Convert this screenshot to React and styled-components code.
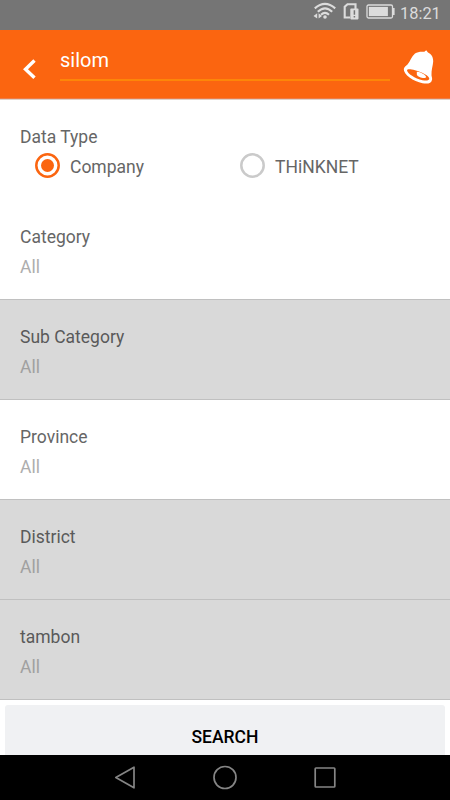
import React from 'react';
import styled, { createGlobalStyle } from 'styled-components';

const GlobalStyle = createGlobalStyle`
  * {
    box-sizing: border-box;
  }

  body {
    margin: 0;
    background: #fff;
    font-family: Roboto, sans-serif;
  }
`;

const Screen = styled.div`
  display: flex;
  flex-direction: column;
  width: 450px;
  height: 800px;
  overflow: hidden;
  background: #fff;
`;

const StatusBar = styled.div`
  display: flex;
  flex: none;
  justify-content: flex-end;
  height: 30px;
  padding-right: 9px;
  background: #757575;
`;

const StatusIcons = styled.svg`
  display: block;
  width: 90px;
  height: 30px;
`;

const Clock = styled.span`
  width: 41px;
  color: #dcdcdc;
  font-size: 16.4px;
  line-height: 28px;
  white-space: nowrap;
`;

const Header = styled.header`
  display: flex;
  flex: none;
  height: 70px;
  background: #fb6510;
  border-bottom: 1px solid #ddd0c9;
  box-shadow: inset 0 -1px #ed7c47;
`;

const BackButton = styled.button`
  width: 60px;
  padding: 0;
  border: 0;
  background: none;

  svg {
    display: block;
  }
`;

const SearchInput = styled.div`
  width: 330px;
  height: 51px;
  padding-top: 18px;
  border-bottom: 2px solid #fd8608;
  color: #fff;
  font-size: 20px;
  line-height: 24px;
`;

const BellIcon = styled.svg`
  display: block;
  width: 60px;
  height: 69px;
`;

const DataType = styled.section`
  flex: none;
  height: 100px;
  padding: 26px 20px 0;
`;

const Label = styled.div`
  color: ${props => (props.$disabled ? '#5a5a5a' : '#666')};
  font-size: 17.5px;
  line-height: 22px;
`;

const Options = styled.div`
  display: flex;
  padding-left: 15px;
  margin-top: 5px;
`;

const Option = styled.div`
  display: flex;
  flex: none;
  gap: 10px;
  width: ${props => props.$width};
  color: #666;
  font-size: 17.5px;
  line-height: 28px;
`;

const RadioIcon = styled.svg`
  display: block;
  flex: none;
  width: 25px;
  height: 25px;
  color: ${props => (props.$checked ? '#fb6510' : '#cacaca')};
`;

const Row = styled.div`
  flex: none;
  height: 100px;
  padding: 26px 20px 0;
  border-bottom: 1px solid #c0c0c0;
  background: ${props => (props.$disabled ? '#d9d9d9' : '#fff')};
`;

const Value = styled.div`
  margin-top: 8px;
  color: ${props => (props.$disabled ? '#a0a0a0' : '#adadad')};
  font-size: 17.5px;
  line-height: 22px;
`;

const Footer = styled.div`
  flex: none;
  height: 55px;
  padding: 5px 5px 0;
`;

const SearchButton = styled.button`
  display: block;
  width: 100%;
  height: 50px;
  padding: 13px 0 0;
  border: 0;
  border-radius: 3px 3px 0 0;
  background: #f0f1f3;
  color: #000;
  font: 500 17.5px/24px Roboto, sans-serif;
`;

const NavBar = styled.nav`
  flex: none;
  height: 45px;
  background: #000;

  svg {
    display: block;
  }
`;

const fields = [
  { label: 'Category', value: 'All' },
  { label: 'Sub Category', value: 'All', disabled: true },
  { label: 'Province', value: 'All' },
  { label: 'District', value: 'All', disabled: true },
  { label: 'tambon', value: 'All', disabled: true },
];

const Radio = ({ checked }) => (
  <RadioIcon $checked={checked} viewBox="0 0 25 25">
    <circle cx="12.5" cy="12.5" r="11.2" fill="none" stroke="currentColor" strokeWidth="2.5" />
    {checked && <circle cx="12.5" cy="12.5" r="6.5" fill="currentColor" />}
  </RadioIcon>
);

const Field = ({ label, value, disabled }) => (
  <Row $disabled={disabled}>
    <Label $disabled={disabled}>{label}</Label>
    <Value $disabled={disabled}>{value}</Value>
  </Row>
);

export default function App() {
  return (
    <>
      <GlobalStyle />
      <Screen>
        <StatusBar>
          <StatusIcons viewBox="310 0 90 30">
            <g fill="none" stroke="#dcdcdc" strokeWidth="2.1">
              <path d="M314.8 8.4Q325 -.6 335.2 8.4" />
              <path d="M317.8 11.8Q325 4.8 332.2 11.8" />
              <path d="M321 14.8Q325 11 329 14.8" />
            </g>
            <circle cx="325" cy="17" r="1.8" fill="#dcdcdc" />
            <path d="M317.2 13.2v5.4l-3.7-2.7zM318.6 13.2v5.4l3.4-2.7z" fill="#dcdcdc" />
            <path d="M350 17.5h-5.3V6.8l2.8-2.6h8v5" fill="none" stroke="#dcdcdc" strokeWidth="2.1" />
            <rect x="350.3" y="8.6" width="8.2" height="10.8" rx=".8" fill="#dcdcdc" />
            <path d="M354.4 10.3v4.4M354.4 16v1.6" stroke="#757575" strokeWidth="1.5" />
            <rect x="367" y="5" width="25.5" height="13" rx="1.5" fill="none" stroke="#dcdcdc" strokeWidth="1.3" />
            <rect x="368.9" y="6.9" width="19" height="9.2" fill="#dcdcdc" />
            <path d="M393.7 8v7" stroke="#dcdcdc" strokeWidth="1.8" />
          </StatusIcons>
          <Clock>18:21</Clock>
        </StatusBar>

        <Header>
          <BackButton aria-label="Back">
            <svg width="60" height="69" viewBox="0 0 60 69">
              <path d="M34.5 30.5L25.5 39.2l9 8.6" fill="none" stroke="#fff" strokeWidth="3.4" />
            </svg>
          </BackButton>
          <SearchInput>silom</SearchInput>
          <BellIcon viewBox="390 30 60 69">
            <path
              fill="#fff"
              fillRule="evenodd"
              d="M424.4 51.8L426.2 50.2 428 52.4C431.6 53.8 433.4 57.5 433.2 61.5C432.9 66 431.2 70 431.5 75.2C431.7 77.2 432.3 77.8 432.1 79.4C431.5 83.5 427.5 84.2 422.5 83.2C413.5 81.5 403.3 74.5 403.8 69C404 66.9 406 66.2 407.5 64.5C410.5 60.8 411.4 56.6 415 53.5C417.6 51.7 421 51.4 424.4 51.8ZM407 70.2C407.3 73.4 415 78.6 422.5 80.2C426.3 81 429.1 80.6 429.3 78.8C429.5 76.1 422 71.8 415 70.2C411 69.3 407.3 68.8 407 70.2Z"
            />
            <path d="M416.8 71.8C419.4 71.2 426.2 75 426.2 77.2C425.2 78.9 417.6 77.6 416.8 74.5Z" fill="#fff" />
          </BellIcon>
        </Header>

        <DataType>
          <Label>Data Type</Label>
          <Options>
            <Option $width="205px">
              <Radio checked />
              Company
            </Option>
            <Option $width="150px">
              <Radio />
              THiNKNET
            </Option>
          </Options>
        </DataType>

        {fields.map(field => (
          <Field key={field.label} {...field} />
        ))}

        <Footer>
          <SearchButton>SEARCH</SearchButton>
        </Footer>

        <NavBar>
          <svg width="450" height="45" viewBox="0 755 450 45" fill="none" stroke="#858585" strokeWidth="1.7">
            <path d="M134 767.2v20.6L115.8 777.5z" strokeLinejoin="round" />
            <circle cx="225" cy="777.5" r="11" />
            <rect x="315.2" y="768" width="19.6" height="19" rx=".8" />
          </svg>
        </NavBar>
      </Screen>
    </>
  );
}
